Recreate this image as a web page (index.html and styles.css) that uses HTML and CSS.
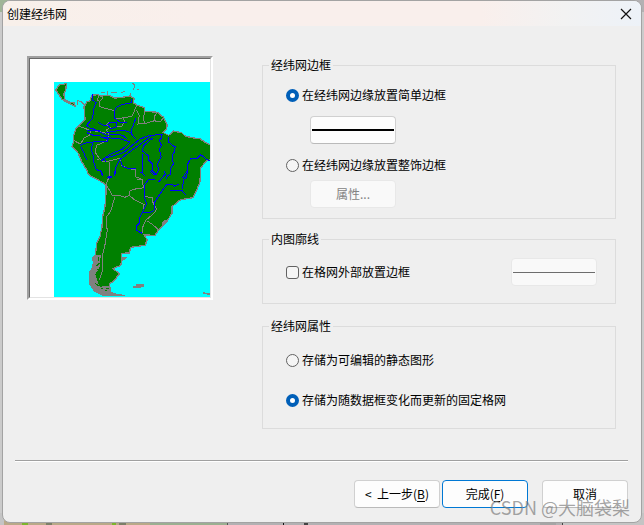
FILE: index.html
```html
<!DOCTYPE html>
<html lang="zh-CN">
<head>
<meta charset="utf-8">
<title>创建经纬网</title>
<link rel="stylesheet" href="styles.css">
</head>
<body>
<form class="dialog">
  <header class="titlebar">
    <h1 class="title">创建经纬网</h1>
    <button type="button" class="close" aria-label="关闭"><svg width="12" height="12" viewBox="0 0 12 12"><path d="M1 1L11 11M11 1L1 11" stroke="#111" stroke-width="1.2" fill="none"/></svg></button>
  </header>
  <main class="content">
    <div class="preview">
      <svg class="map" viewBox="30 27 540 714" shape-rendering="crispEdges" aria-hidden="true">
        <path fill="#fff" d="M30 27H570V741H30Z"/>
        <path fill="#0ff" d="M102 96H570V741H102Z"/>
        <g fill="green" stroke="gray" stroke-width="4">
          <path d="M580 284L570 284L552 275L540 266L520 264L495 258L485 248L460 243L446 256L428 247L440 238L441 222L430 200L424 198L414 187L375 184L372 173L350 165L340 158L342 146L332 138L300 143L285 144L266 136L245 138L232 134L215 136L210 152L200 156L192 170L195 208L182 222L168 236L160 258L162 272L156 290L175 310L185 335L200 360L204 370L215 380L232 388L248 398L258 404L258 430L255 470L248 500L246 530L240 560L230 580L226 615L218 625L222 640L214 660L208 668L208 690L216 712L232 728L250 736L285 735L315 737L290 733L272 728L268 702L282 692L298 672L280 656L302 646L306 632L304 610L328 609L332 592L375 586L382 570L372 555L405 556L415 540L440 515L456 490L456 470L480 450L518 443L528 425L540 395L542 355L556 335L580 325"/>
          <path d="M139 101L118 105L107 120L118 135L126 148L150 162L165 168L163 159L148 156L134 148L132 132L138 115Z"/>
        </g>
        <g fill="none" stroke="gray" stroke-width="3">
          <path d="M171 152L184 154L196 168M184 154L190 163M172 166V154M338 99L344 106L340 120M352 119H358M243 127H256M261 123V134M273 126H291M304 128L314 124M318 139H334M332 130V142"/>
          <path d="M237 136L232 150L240 154L249 144L242 138M240 154L238 170L260 176L282 182L284 204M350 165L342 186L336 199L306 204L284 204M290 230L306 228L314 214L308 202M350 180L358 196L354 222L376 221L390 216L404 212L420 216L432 202M375 184L369 204L374 220M410 188L402 202L408 216"/>
          <path d="M174 228L192 234L212 242L208 256L192 264L182 282L165 274M212 242L236 244L258 250M268 216L260 224L270 232L259 240L266 252L263 270M262 272L230 286L225 306L238 326L252 336L272 332L302 324M238 326L232 330M270 336L268 380L258 402M302 324L304 346L320 354L348 360L346 380L366 388L370 410M260 408L272 426L278 438L300 437L314 442L328 436L330 422L350 416L374 413M328 436L342 448L372 464L370 482M374 440L396 442L398 456L410 478L402 490L378 510L368 532L366 550M382 513L398 524L414 538M284 442L272 484L260 500L258 520L262 540L254 590L246 620L248 660L238 690M350 388H368"/>
        </g>
        <g fill="gray">
          <path d="M224 616H242L240 648L226 674L234 698L240 710L270 708L276 730L314 738H250L222 724L208 704V664L218 656L216 644L222 640L216 630Z"/>
          <path d="M304 622H322L314 630H304ZM340 708H347V703H372V711H362V714H340ZM428 512L440 510V518L426 526ZM548 726H556V730H570V736H562V733H548Z"/>
        </g>
        <path fill="none" stroke="green" stroke-width="3" d="M234 622V632M238 640L230 648M232 656L236 664M228 672V680M236 668L244 674M234 686L230 694M242 716H248M254 722H262M236 708L226 700M258 716H266"/>
        <g fill="none" stroke="#00f" stroke-width="3">
          <path d="M218 132V150L228 158L222 174L218 204L200 226L210 234L224 238L260 256L290 252L308 256L320 266M334 148V158L306 164L290 172L282 184L284 204L300 216L320 216M234 218L256 228L270 218L288 216L290 230L272 236L262 222M202 242L240 240M258 248L308 240L332 248L346 266M348 204L334 240L336 254M200 248L220 256L238 256L244 262L300 266L330 276L316 290L306 298L276 310L260 320L242 334"/>
          <path d="M180 286L200 278L220 276L262 274L266 268L244 262M182 290L192 310L200 330M218 278L214 300L222 322L220 332L228 358L242 364L248 378M256 336L254 324L280 318L310 308L332 290L354 272L362 266L384 258L428 252M300 328L334 302L392 260M300 326L288 350L284 378M302 332L308 350L328 356L348 356M262 382H274V378H264M268 380V386"/>
          <path d="M424 252L426 264L418 270L424 286L418 300L424 320L412 344L416 360L408 374L396 362L398 342L386 330L384 316L366 302L372 286L398 264M366 310L368 370M446 262V276L460 288H466L464 304L456 318L460 342L450 358L452 372L444 376L438 386M570 332L560 328L542 314L530 326L512 326L502 344L502 362L488 384"/>
          <path d="M242 360L248 372M284 364V378L288 360M362 366L374 376M392 364L400 374L412 370M432 362L436 372L416 396M404 388H386L374 404L372 438L380 462L370 480L360 500L358 520L348 530V540L366 550M368 486L390 488L402 482L404 456L428 420L440 404L456 402L464 408L476 402M450 422H486L496 434M502 364L500 382L490 388L488 416"/>
        </g>
      </svg>
    </div>
    <div class="groups">
      <fieldset class="group border-group">
        <legend>经纬网边框</legend>
        <label class="option"><input type="radio" name="border" checked>在经纬网边缘放置简单边框</label>
        <button type="button" class="btn line-btn indented" aria-label="线样式"><span class="thick"></span></button>
        <label class="option second"><input type="radio" name="border">在经纬网边缘放置整饰边框</label>
        <button type="button" class="btn indented props" disabled>属性...</button>
      </fieldset>
      <fieldset class="group neat-group">
        <legend>内图廓线</legend>
        <div class="row">
          <label class="option"><input type="checkbox">在格网外部放置边框</label>
          <button type="button" class="btn line-btn" disabled aria-label="边框样式"><span class="thin"></span></button>
        </div>
      </fieldset>
      <fieldset class="group prop-group">
        <legend>经纬网属性</legend>
        <label class="option"><input type="radio" name="store">存储为可编辑的静态图形</label>
        <label class="option"><input type="radio" name="store" checked>存储为随数据框变化而更新的固定格网</label>
      </fieldset>
    </div>
  </main>
  <footer class="footer">
    <button type="button" class="btn">&lt;&nbsp; 上一步(<u>B</u>)</button>
    <button type="submit" class="btn primary">完成(<u>F</u>)</button>
    <button type="button" class="btn cancel">取消</button>
  </footer>
</form>
<div class="watermark">CSDN @大脑袋梨</div>
</body>
</html>
```
FILE: styles.css
```css
* { box-sizing: border-box; }

body {
  position: relative;
  display: flex;
  min-height: 100vh;
  margin: 0;
  padding: 0 2px 2px;
  font: 12px/18px "Noto Sans CJK SC", sans-serif;
  color: #000;
  background:
    linear-gradient(90deg, #c4c4c4 4px, #b9a988 4px 22px, #7db52b 22px 28px, #b9a988 28px 46px, #7c7f68 46px 52px, #b9a988 52px 112px, #7db52b 112px 116px, #b9a988 116px 119px, #7c7f68 119px 126px, #b9a988 126px 150px, #9baf91 150px 227px, #555 227px 228px, #b3b1b3 228px 283px, #111 283px 284px, #b3b1b3 284px 304px, #444 304px 308px, #b3b1b3 308px 540px, #a5a5a5 540px 556px, #b3b1b3 556px 562px, #444 562px 563px, #c4c4c4 563px) bottom / 100% 12px no-repeat,
    linear-gradient(90deg, #9fb597 112px, #666 112px 113px, #b9a988 113px 144px, #7db52b 144px 150px, #b9a988 150px 157px, #7db52b 157px 163px, #b9a988 163px 191px, #9fb597 191px 223px, #b3b1b3 223px) top / 100% 12px no-repeat,
    #cbcbcb;
}

.dialog {
  display: flex;
  flex: 1;
  flex-direction: column;
  overflow: hidden;
  border: 1px solid #a3a3a3;
  border-radius: 8px;
  background: #efefef;
}

.titlebar {
  display: flex;
  align-items: center;
  justify-content: space-between;
  height: 25px;
  padding: 0 9px 0 4px;
  background: linear-gradient(90deg, #f8f0ea, #f9efec 30%, #f9efec 75%, #f2f2f2 88%, #edf2f8);
}

.title {
  margin: 0;
  font-size: 12px;
  font-weight: 400;
}

.close {
  display: flex;
  padding: 0;
  border: 0;
  background: none;
}

.content {
  display: flex;
  align-items: flex-start;
  gap: 49px;
  padding: 30px 25px 0 24px;
}

.preview {
  flex: none;
  width: 186px;
  border: 2px solid;
  border-color: #a0a0a0 #fff #fff #a0a0a0;
}

.map {
  display: block;
  width: 100%;
  border: 1px solid;
  border-color: #696969 #e3e3e3 #e3e3e3 #696969;
}

.groups { flex: 1; }

.group {
  min-width: 0;
  margin: 0;
  border: 1px solid #dcdcdc;
}

.group legend {
  margin-left: -17px;
  padding: 0 2px;
}

.border-group { padding: 12px 18px 10px 23px; }

.neat-group {
  margin-top: 11px;
  padding: 10px 18px 17px 23px;
}

.prop-group {
  display: grid;
  gap: 22px;
  margin-top: 13px;
  padding: 16px 18px 19px 23px;
}

.option {
  display: flex;
  align-items: center;
  gap: 3px;
}

.option.second { margin-top: 12px; }

.option input {
  appearance: none;
  flex: none;
  width: 13px;
  height: 13px;
  margin: 0;
  border: 1px solid #626262;
  border-radius: 3px;
  background: #f5f5f5;
}

.option input[type="radio"] { border-radius: 50%; }

.option input[type="radio"]:checked {
  border: 4px solid #005fb8;
  background: #fff;
}

.row {
  display: flex;
  align-items: center;
  justify-content: space-between;
}

.btn {
  display: block;
  width: 86px;
  height: 28px;
  padding: 0;
  border: 1px solid #d0d0d0;
  border-bottom-color: #bababa;
  border-radius: 4px;
  background: #fdfdfd;
  color: #000;
  font: inherit;
}

.btn:disabled {
  border-color: #e8e8e8;
  background: #f9f9f9;
  color: #838383;
}

.indented { margin: 12px 0 0 24px; }

.indented.props { margin-top: 6px; }

.line-btn { padding: 0 1px; }

.thick,
.thin {
  display: block;
  height: 2px;
  background: #000;
}

.thin {
  height: 1px;
  background: #6d6d6d;
}

.footer {
  display: flex;
  justify-content: flex-end;
  gap: 2px;
  margin: 31px 13px 13px 12px;
  padding-top: 19px;
  border-top: 1px solid #a0a0a0;
  box-shadow: inset 0 1px #fff;
}

.btn.primary { border-color: #0078d4; }

.cancel { margin-left: 12px; }

.btn u { text-underline-offset: 2px; }

.watermark {
  position: absolute;
  right: 14px;
  bottom: 6px;
  color: rgba(125, 125, 125, 0.7);
  font-size: 18px;
  line-height: 24px;
  pointer-events: none;
}
```
